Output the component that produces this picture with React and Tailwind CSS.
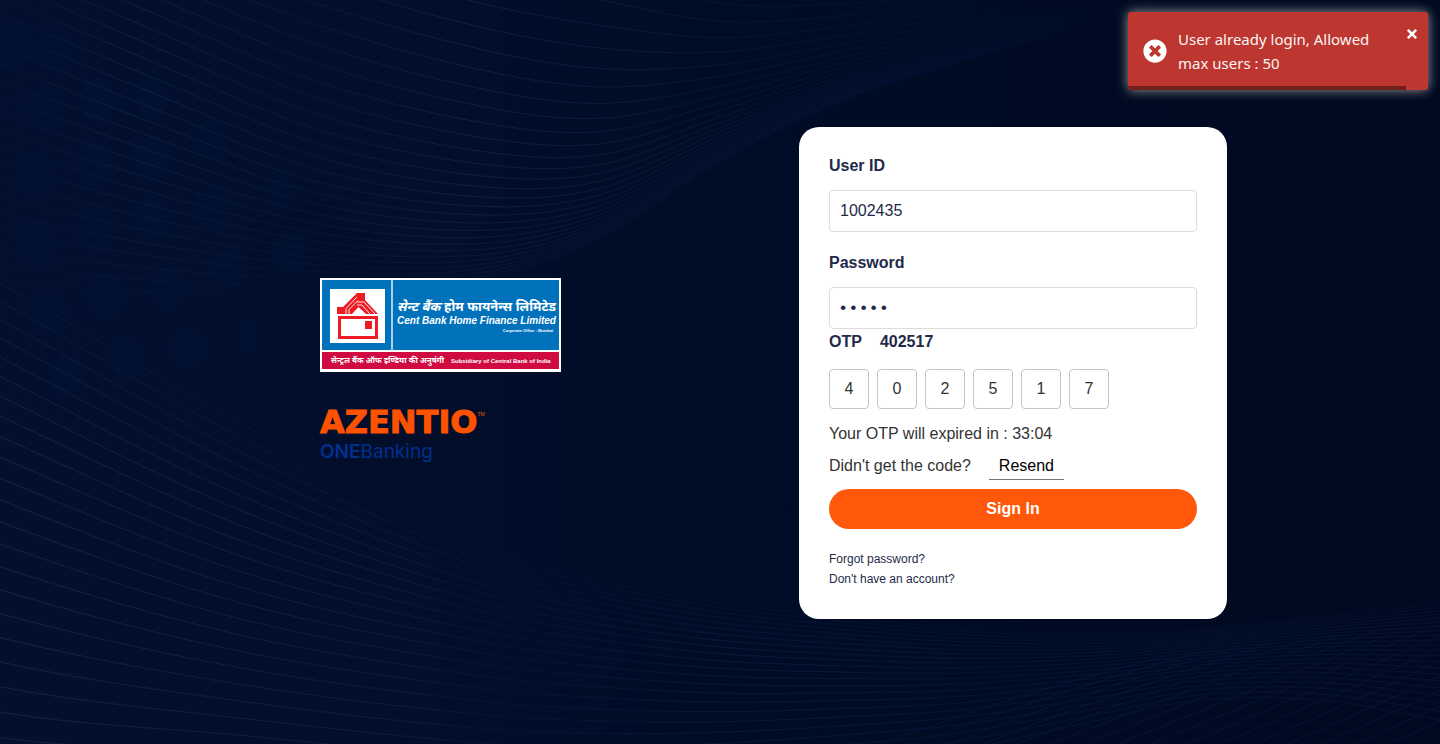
import { FaTimes, FaTimesCircle } from "react-icons/fa";

/* A column gives the first line's y, the last line's y and the ratio between gaps. */
function lineY([, top, bottom, ratio], k, count) {
  const part = ratio === 1 ? k / count : (1 - ratio ** k) / (1 - ratio ** count);
  return top + (bottom - top) * part;
}

function smoothPath(points) {
  let d = `M${points[0][0]} ${points[0][1].toFixed(1)}`;
  for (let i = 0; i < points.length - 1; i++) {
    const a = points[Math.max(i - 1, 0)];
    const b = points[i];
    const c = points[i + 1];
    const e = points[Math.min(i + 2, points.length - 1)];
    const h = c[0] - b[0];
    const m1 = c[0] === a[0] ? 0 : (c[1] - a[1]) / (c[0] - a[0]);
    const m2 = e[0] === b[0] ? 0 : (e[1] - b[1]) / (e[0] - b[0]);
    d += `C${b[0] + h / 3} ${(b[1] + (m1 * h) / 3).toFixed(1)} ${c[0] - h / 3} ${(c[1] - (m2 * h) / 3).toFixed(1)} ${c[0]} ${c[1].toFixed(1)}`;
  }
  return d;
}

function family(columns, from, count) {
  const paths = [];
  for (let k = from; k <= count; k++) {
    paths.push(smoothPath(columns.map((c) => [c[0], lineY(c, k, count)])));
  }
  return paths;
}

const upperLines = family(
  [
    [-60, -165, 265, 1],
    [0, -136, 280, 1],
    [160, -72, 292, 0.98],
    [320, -18, 290, 0.945],
    [480, 27, 280, 0.925],
    [600, 48, 238, 0.9],
    [720, 52, 162, 0.89],
    [840, 36, 102, 0.88],
    [960, 16, 62, 0.88],
    [1100, -10, 22, 0.9],
  ],
  -3,
  25,
);

const lowerLines = family(
  [
    [-60, 253, 738, 1.018],
    [0, 283, 764, 1.018],
    [240, 423, 770, 1.01],
    [480, 545, 790, 1.04],
    [600, 580, 790, 1.05],
    [720, 603, 780, 1.05],
    [840, 617, 766, 1.05],
    [960, 628, 750, 1.05],
    [1100, 634, 720, 1.05],
    [1200, 629, 700, 1.05],
    [1320, 616, 700, 1.05],
    [1440, 601, 720, 1.05],
  ],
  0,
  22,
);

const risingLines = Array.from({ length: 16 }, (_, i) => {
  const x = 840 + i * 34;
  return `M${x} 760Q${x + 150} 700 ${x + 330} ${655 - i * 4}`;
});

const dots = [
  [12, 45, 22], [54, 50, 20], [44, 108, 20], [98, 100, 20], [152, 98, 18],
  [36, 174, 20], [93, 164, 20], [152, 158, 20], [37, 243, 20], [95, 231, 20],
  [153, 219, 20], [214, 208, 20], [48, 312, 20], [105, 296, 20], [168, 288, 19],
  [228, 268, 19], [290, 254, 18], [188, 348, 20], [250, 336, 18], [66, 375, 18],
  [126, 358, 18], [0, 108, 9], [280, 190, 18], [212, 140, 18],
];

function Backdrop() {
  return (
    <svg
      className="absolute inset-0 h-full w-full"
      viewBox="0 0 1440 744"
      preserveAspectRatio="xMidYMid slice"
      fill="none"
      aria-hidden="true"
    >
      <defs>
        <linearGradient id="night" x1="0" y1="0" x2="1440" y2="0" gradientUnits="userSpaceOnUse">
          <stop offset="0" stopColor="#020f2f" />
          <stop offset="0.3" stopColor="#020e2a" />
          <stop offset="0.55" stopColor="#000c25" />
          <stop offset="1" stopColor="#000920" />
        </linearGradient>
        <linearGradient id="upper" x1="0" y1="0" x2="1100" y2="0" gradientUnits="userSpaceOnUse">
          <stop offset="0" stopColor="#0a1f3c" stopOpacity="0.4" />
          <stop offset="0.12" stopColor="#0b2440" stopOpacity="0.9" />
          <stop offset="0.28" stopColor="#061a3a" stopOpacity="0.9" />
          <stop offset="0.43" stopColor="#0b2440" stopOpacity="0.9" />
          <stop offset="0.6" stopColor="#07193a" stopOpacity="0.9" />
          <stop offset="0.82" stopColor="#051136" stopOpacity="0.7" />
          <stop offset="1" stopColor="#051136" stopOpacity="0" />
        </linearGradient>
        <linearGradient id="lower" x1="0" y1="0" x2="1440" y2="0" gradientUnits="userSpaceOnUse">
          <stop offset="0" stopColor="#142637" />
          <stop offset="0.12" stopColor="#0f2237" />
          <stop offset="0.28" stopColor="#0a1e38" />
          <stop offset="0.36" stopColor="#05133a" stopOpacity="0.7" />
          <stop offset="0.5" stopColor="#08173a" />
          <stop offset="0.75" stopColor="#051233" />
          <stop offset="1" stopColor="#051233" />
        </linearGradient>
      </defs>
      <rect width="1440" height="744" fill="url(#night)" />
      <g fill="#04153a" fillOpacity="0.35">
        {dots.map(([x, y, r]) => (
          <ellipse key={`${x}-${y}`} cx={x} cy={y} rx={r - 1} ry={r + 3} />
        ))}
      </g>
      <g stroke="url(#upper)">
        {upperLines.map((d, i) => (
          <path key={d} d={d} strokeOpacity={i < 14 ? 1 : 1 - (i - 14) * 0.045} />
        ))}
      </g>
      <g stroke="url(#lower)">
        {lowerLines.map((d, i) => (
          <path key={d} d={d} strokeOpacity={Math.min(1, 0.45 + i * 0.09)} />
        ))}
      </g>
      <g stroke="#07163c" strokeOpacity="0.8">
        {risingLines.map((d) => (
          <path key={d} d={d} />
        ))}
      </g>
    </svg>
  );
}

function CentBankLogo() {
  return (
    <svg
      className="block h-[94px] w-[241px]"
      viewBox="0 0 241 94"
      role="img"
      aria-label="Cent Bank Home Finance Limited"
    >
      <rect width="241" height="94" fill="#fff" />
      <rect x="2" y="2" width="237" height="70" fill="#0072bc" />
      <rect x="2" y="74" width="237" height="17" fill="#d00b41" />
      <rect x="71" y="2" width="2" height="71" fill="#a9cfe9" />
      <rect x="10" y="11" width="55" height="54" fill="#fff" />
      <g fill="#ed1c24">
        <path d="M17 29H23L37 15H45V22L58 36H17Z" />
        <path fillRule="evenodd" d="M18 38H58V61H18ZM21 41V58H55V41Z" />
        <rect x="45" y="43" width="7" height="8" />
      </g>
      <path d="M38.500 29L32 36H46Z" fill="#fff" />
      <g fill="none" stroke="#fff" strokeWidth="0.9">
        <path d="M26 36V30.500L37 19" />
        <path d="M29 36V31.500L38 22.500" />
        <path d="M37 24H44L55 36" />
        <path d="M37 27H42L50 36" />
      </g>
      <g fill="#fff" fontFamily="'Liberation Sans', 'Noto Sans Devanagari', 'Noto Sans', sans-serif" fontWeight="700">
        <text x="77" y="33" fontSize="13">
          <tspan fontStyle="italic">सेन्ट बैंक</tspan> होम फायनेन्स लिमिटेड
        </text>
        <text x="77" y="46" fontSize="10" fontStyle="italic">
          Cent Bank Home Finance Limited
        </text>
        <text x="233" y="54" fontSize="4" textAnchor="end">
          Corporate Office : Mumbai
        </text>
        <text x="11" y="85" fontSize="8">
          सेन्ट्रल बैंक ऑफ इण्डिया की अनुषंगी
        </text>
        <text x="131" y="85" fontSize="6">
          Subsidiary of Central Bank of India
        </text>
      </g>
    </svg>
  );
}

function AzentioLogo() {
  return (
    <div className="mt-9">
      <div className="flex items-start text-[#ff5200]">
        <span className="font-['DejaVu_Sans',sans-serif] text-[32px] leading-7 font-bold [-webkit-text-stroke:1px_#ff5200]">
          AZENTIO
        </span>
        <span className="font-['Liberation_Sans',sans-serif] text-[5px] leading-3">TM</span>
      </div>
      <div className="mt-1 font-[Inter,sans-serif] text-[19px] leading-6 text-[#00308f]">
        <span className="font-semibold">ONE</span>Banking
      </div>
    </div>
  );
}

function Toast() {
  return (
    <div
      role="alert"
      className="absolute top-3 right-3 flex w-[300px] items-center overflow-hidden rounded-[3px] bg-[#bd362f] p-[15px] font-['Noto_Sans',sans-serif] text-white shadow-[0_0_12px_#999]"
    >
      <FaTimesCircle className="size-6 shrink-0" aria-hidden="true" />
      <p className="ml-[11px] flex-1 text-[15px] leading-6 opacity-95">
        User already login, Allowed
        <br />
        max users : 50
      </p>
      <button type="button" aria-label="Close" className="absolute top-[15px] right-[9px]">
        <FaTimes className="size-[14px]" />
      </button>
      <div className="absolute bottom-0 left-0 h-1 w-[278px] bg-[#71201c]" />
    </div>
  );
}

const fieldClass =
  "block h-[42px] w-full rounded border border-[#dcdcdc] bg-white text-[#1f2a4a] outline-none";
const labelClass = "block text-base leading-[18px] font-bold text-[#1f2a4a]";

function LoginCard() {
  return (
    <form
      className="w-[428px] rounded-[20px] bg-white p-[30px]"
      onSubmit={(event) => event.preventDefault()}
    >
      <label htmlFor="user-id" className={labelClass}>
        User ID
      </label>
      <input
        id="user-id"
        type="text"
        defaultValue="1002435"
        className={`${fieldClass} mt-[15px] px-[10px] text-base`}
      />

      <label htmlFor="password" className={`${labelClass} mt-[22px]`}>
        Password
      </label>
      <input
        id="password"
        type="password"
        defaultValue="12345"
        className={`${fieldClass} mt-[15px] px-2 font-['Liberation_Mono',monospace] text-[17px]`}
      />

      <div className={`${labelClass} mt-1 flex gap-[18px]`}>
        <span>OTP</span>
        <span>402517</span>
      </div>
      <div className="mt-[18px] flex gap-2">
        {["4", "0", "2", "5", "1", "7"].map((digit, i) => (
          <input
            key={i}
            type="text"
            inputMode="numeric"
            maxLength={1}
            defaultValue={digit}
            aria-label={`OTP digit ${i + 1}`}
            className="size-10 rounded border border-[#c5c5c5] bg-white text-center text-base text-[#333] outline-none"
          />
        ))}
      </div>

      <p className="mt-[13px] text-base leading-6 text-[#333]">Your OTP will expired in : 33:04</p>
      <div className="mt-2 flex items-start gap-[18px] text-base leading-6 text-[#333]">
        <span>Didn't get the code?</span>
        <button
          type="button"
          className="h-[26px] border-b border-[#777] px-[10px] pb-px leading-6 text-black"
        >
          Resend
        </button>
      </div>

      <button
        type="submit"
        className="mt-[9px] block h-10 w-full rounded-full bg-[#ff580a] text-base font-bold text-white"
      >
        Sign In
      </button>

      <div className="mt-5 flex flex-col items-start text-xs leading-5 text-[#1f2a4a]">
        <a href="#forgot">Forgot password?</a>
        <a href="#register">Don't have an account?</a>
      </div>
    </form>
  );
}

export default function App() {
  return (
    <div className="relative min-h-screen overflow-hidden bg-[#000b24] font-['Liberation_Sans',Arial,sans-serif]">
      <Backdrop />
      <main className="relative grid min-h-screen grid-cols-2 items-center pt-0.5">
        <section className="pb-1 pl-80">
          <CentBankLogo />
          <AzentioLogo />
        </section>
        <section className="pl-[79px]">
          <LoginCard />
        </section>
      </main>
      <Toast />
    </div>
  );
}
